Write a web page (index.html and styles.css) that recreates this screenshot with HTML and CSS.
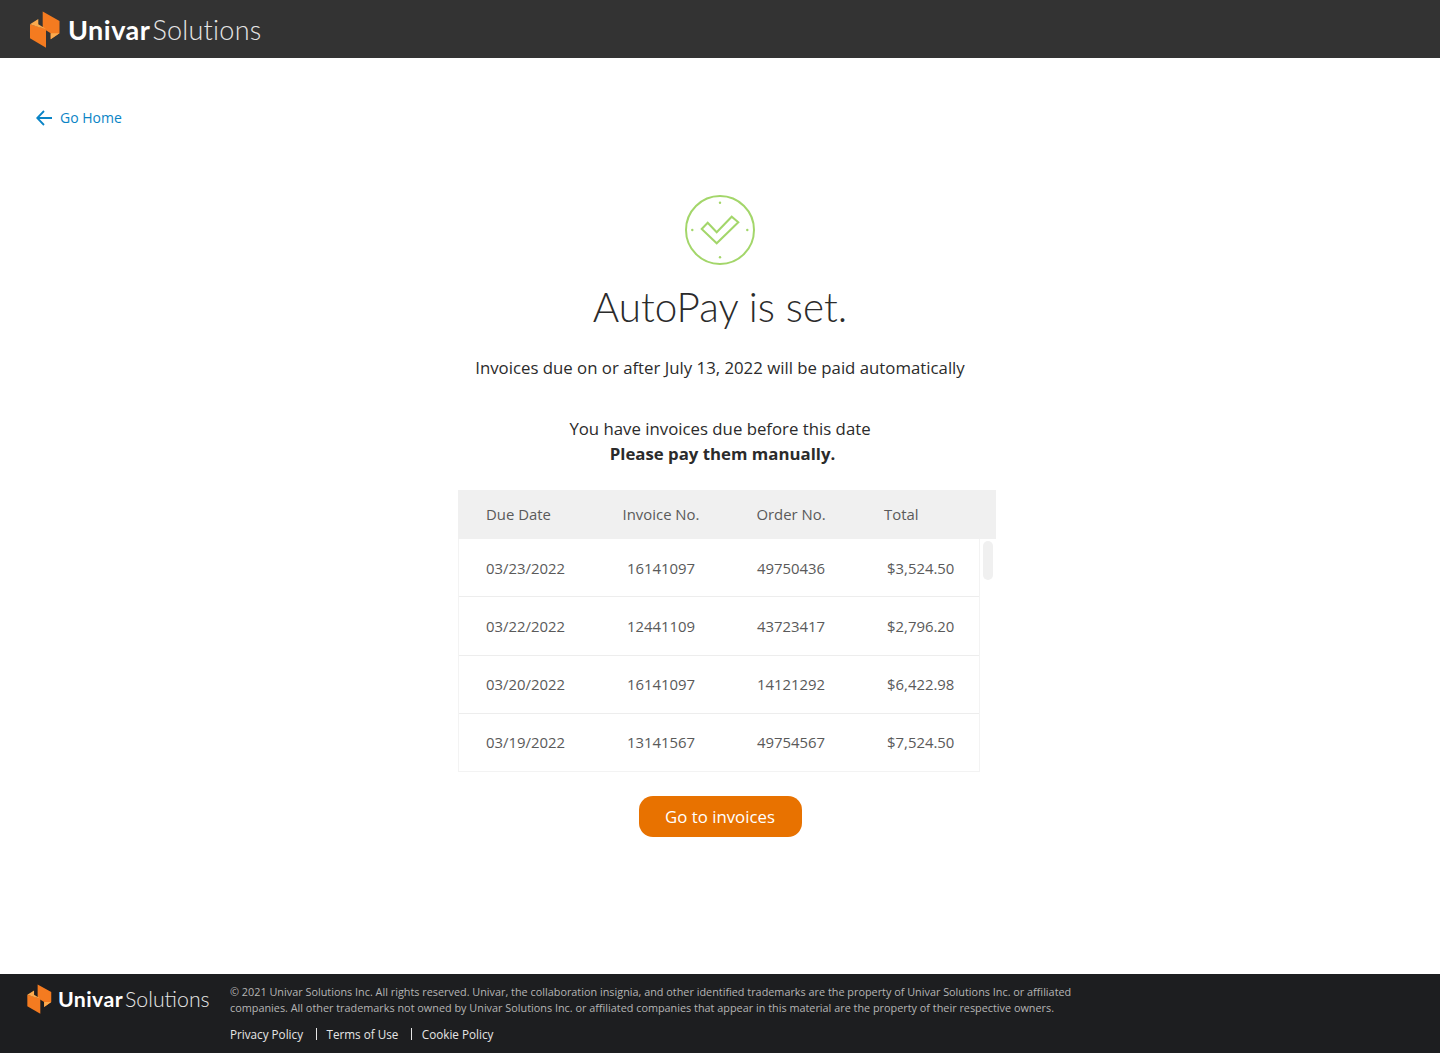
FILE: index.html
```html
<!DOCTYPE html>
<html lang="en">
<head>
  <meta charset="UTF-8" />
  <meta name="viewport" content="width=device-width, initial-scale=1.0" />
  <title>Univar Solutions - AutoPay</title>
  <link rel="stylesheet" href="styles.css">
</head>
<body>
  <header class="topbar">
    <a class="brand" href="#">
      <svg class="brand-mark" viewBox="30 11 30 37" aria-hidden="true">
        <polygon fill="#f47b20" points="42.7,11.5 59.5,21 59.5,33.3 50.7,39.3 50.7,33.3 42.7,28.3" />
        <polygon fill="#fbaa4e" points="50.7,33.3 59.5,33.3 50.7,39.3" />
        <polygon fill="#f47b20" points="30,24.3 46,29 46,47.7 30,38.3" />
        <polygon fill="#fbaa4e" points="30,24.3 38.3,19 38.3,24.3 46,29 38.3,27" />
      </svg>
      <span class="brand-name"><b>Univar</b>Solutions</span>
    </a>
  </header>

  <main class="content">
    <a class="back-link" href="#">
      <svg class="back-arrow" viewBox="0 0 16 16" aria-hidden="true">
        <path d="M16 8H1.2M8 1L1.2 8L8 15" fill="none" stroke="#0a84c6" stroke-width="1.8" />
      </svg>
      <span class="back-text">Go Home</span>
    </a>

    <section class="confirm">
      <svg class="check-icon" viewBox="0 0 70 70" aria-hidden="true">
        <circle cx="35" cy="35" r="34" fill="none" stroke="#a3d66a" stroke-width="2" />
        <path d="M16.7 34L22.7 27.7L31.7 37.3L46.7 21.7L53.3 27.3L31.7 48.3Z" fill="none" stroke="#a3d66a" stroke-width="2" />
        <circle cx="35" cy="7.7" r="1.2" fill="#a3d66a" />
        <circle cx="35" cy="62.3" r="1.2" fill="#a3d66a" />
        <circle cx="7.3" cy="35" r="1.2" fill="#a3d66a" />
        <circle cx="62.3" cy="35" r="1.2" fill="#a3d66a" />
      </svg>
      <h1>AutoPay is set.</h1>
      <p class="lead">Invoices due on or after July 13, 2022 will be paid automatically</p>
      <p class="notice">You have invoices due before this date<br><strong>Please pay them manually.</strong></p>

      <div class="invoices">
        <div class="row row-head">
          <span class="cell-date">Due Date</span>
          <span>Invoice No.</span>
          <span>Order No.</span>
          <span class="cell-total">Total</span>
        </div>
        <div class="scroller">
          <div class="rows">
            <div class="row">
              <span class="cell-date">03/23/2022</span>
              <span>16141097</span>
              <span>49750436</span>
              <span class="cell-total">$3,524.50</span>
            </div>
            <div class="row">
              <span class="cell-date">03/22/2022</span>
              <span>12441109</span>
              <span>43723417</span>
              <span class="cell-total">$2,796.20</span>
            </div>
            <div class="row">
              <span class="cell-date">03/20/2022</span>
              <span>16141097</span>
              <span>14121292</span>
              <span class="cell-total">$6,422.98</span>
            </div>
            <div class="row">
              <span class="cell-date">03/19/2022</span>
              <span>13141567</span>
              <span>49754567</span>
              <span class="cell-total">$7,524.50</span>
            </div>
          </div>
          <div class="scroll-track"><div class="scroll-thumb"></div></div>
        </div>
      </div>

      <a class="btn" href="#">Go to invoices</a>
    </section>
  </main>

  <footer class="footer">
    <a class="brand brand-small" href="#">
      <svg class="brand-mark" viewBox="30 11 30 37" aria-hidden="true">
        <polygon fill="#f47b20" points="42.7,11.5 59.5,21 59.5,33.3 50.7,39.3 50.7,33.3 42.7,28.3" />
        <polygon fill="#fbaa4e" points="50.7,33.3 59.5,33.3 50.7,39.3" />
        <polygon fill="#f47b20" points="30,24.3 46,29 46,47.7 30,38.3" />
        <polygon fill="#fbaa4e" points="30,24.3 38.3,19 38.3,24.3 46,29 38.3,27" />
      </svg>
      <span class="brand-name"><b>Univar</b>Solutions</span>
    </a>
    <div class="legal">
      <p>© 2021 Univar Solutions Inc. All rights reserved. Univar, the collaboration insignia, and other identified trademarks are the property of Univar Solutions Inc. or affiliated companies. All other trademarks not owned by Univar Solutions Inc. or affiliated companies that appear in this material are the property of their respective owners.</p>
      <nav class="legal-links">
        <a href="#">Privacy Policy</a>
        <a href="#">Terms of Use</a>
        <a href="#">Cookie Policy</a>
      </nav>
    </div>
  </footer>
</body>
</html>
```
FILE: styles.css
```css
* { box-sizing: border-box; }
body {
  font-family: "Open Sans", Arial, sans-serif;
  margin: 0;
  min-height: 100vh;
  display: flex;
  flex-direction: column;
  color: #2b2b2b;
  background: white;
}
a { text-decoration: none; }

.topbar {
  height: 58px;
  background-color: #333;
  padding-left: 30px;
  display: flex;
  align-items: center;
}
.brand {
  display: flex;
  align-items: center;
  color: white;
}
.brand-mark {
  width: 30px;
  height: 37px;
  margin-right: 8px;
}
.brand-name {
  font-family: Lato, sans-serif;
  font-size: 27px;
  font-weight: 300;
  letter-spacing: 0.25px;
  color: #e6e6e6;
}
.brand-name b {
  font-weight: 700;
  letter-spacing: 0.5px;
  margin-right: 2px;
  color: white;
}

.content {
  flex: 1;
  padding: 50px 36px 0;
}
.back-link {
  display: inline-flex;
  align-items: center;
  gap: 8px;
  height: 20px;
  font-size: 14px;
  color: #0a84c6;
}
.back-arrow {
  width: 16px;
  height: 16px;
}
.back-text { margin-bottom: 2px; }

.confirm {
  display: flex;
  flex-direction: column;
  align-items: center;
  margin-top: 64px;
}
.check-icon {
  width: 70px;
  height: 70px;
}
h1 {
  font-family: Lato, sans-serif;
  font-size: 40.4px;
  font-weight: 300;
  line-height: 50px;
  margin: 17px 0 0;
  color: #2b2b2b;
}
.lead {
  font-size: 16.8px;
  line-height: 25px;
  margin: 23px 0 0;
}
.notice {
  font-size: 16.8px;
  line-height: 25px;
  margin: 36px 0 0;
  text-align: center;
}
.notice strong { margin-left: 5px; }

.invoices {
  width: 538px;
  margin: 24px 0 0 14px;
  font-size: 14.9px;
  color: #5a5a5a;
}
.row {
  display: grid;
  grid-template-columns: 137px 130px 130px 123px;
  align-items: center;
  height: 58.25px;
  text-align: center;
  border-bottom: 1px solid #ededed;
}
.row-head {
  height: 49px;
  grid-template-columns: 138px 130px 130px 140px;
  padding-bottom: 2px;
  background-color: #f0f0f0;
  border-bottom: none;
}
.cell-date {
  text-align: left;
  padding-left: 27px;
}
.row-head .cell-date { padding-left: 28px; }
.cell-total {
  text-align: left;
  padding-left: 31px;
}
.row-head .cell-total { padding-left: 28px; }
.scroller { display: flex; }
.rows {
  width: 522px;
  border-left: 1px solid #f3f3f3;
  border-right: 1px solid #f3f3f3;
}
.rows .row:last-child { border-bottom-color: #f3f3f3; }
.scroll-track {
  width: 16px;
  padding: 2px 3px 0;
}
.scroll-thumb {
  width: 10px;
  height: 39px;
  background-color: #f0f0f0;
  border-radius: 5px;
}

.btn {
  margin-top: 24px;
  width: 163px;
  height: 41px;
  line-height: 41px;
  text-align: center;
  font-size: 16.8px;
  color: white;
  background-color: #e87200;
  border-radius: 14px;
}

.footer {
  height: 79px;
  background-color: #1d1e20;
  display: flex;
  padding: 10px 0 0 27px;
}
.brand-small {
  height: 28px;
  width: 203px;
  margin-top: 1px;
  flex: none;
}
.brand-small .brand-mark {
  width: 25px;
  height: 30px;
  margin-right: 6px;
}
.brand-small .brand-name {
  font-size: 21.3px;
  letter-spacing: 0;
}
.brand-small .brand-name b { letter-spacing: 0.4px; }
.legal {
  width: 860px;
  font-size: 10.85px;
  line-height: 16px;
  color: #b5b5b5;
}
.legal p { margin: 0; }
.legal-links {
  display: flex;
  margin-top: 10px;
  font-size: 11.7px;
}
.legal-links a {
  color: #e6e6e6;
  padding-right: 13px;
  margin-right: 9.5px;
  border-right: 1px solid #e6e6e6;
  line-height: 12px;
  margin-top: 2px;
}
.legal-links a:last-child { border-right: none; }
```
